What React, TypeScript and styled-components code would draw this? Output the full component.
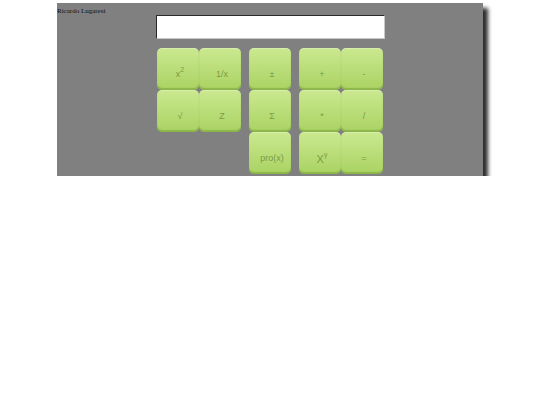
import React from "react"
import styled, { createGlobalStyle } from 'styled-components'

const GlobalStyle = createGlobalStyle`
html, body {
    margin: 0;
    padding: 0;
    background: #FFF;
}
`

const Sup = styled.span`
display: inline-block;
font-size: 7px;
transform: translateY(-4px);
`

type Key = { label: React.ReactNode; big?: boolean } | null

const groups: Key[][] = [
    [
        { label: <>x<Sup>2</Sup></> }, { label: '1/x' },
        { label: '√' }, { label: 'Z' },
        null, null,
    ],
    [
        { label: '±' },
        { label: 'Σ' },
        { label: 'pro(x)' },
    ],
    [
        { label: '+' }, { label: '-' },
        { label: '*' }, { label: '/' },
        { label: <>X<Sup>y</Sup></>, big: true }, { label: '=' },
    ],
]

const App: React.FC = () => (
    <>
        <GlobalStyle />
        <Panel>
            <Title>Ricardo Lugaresi</Title>
            <Display type="text" />
            <Keypad>
                {groups.map((keys, g) => (
                    <Group key={g} cols={keys.length === 3 ? 1 : 2}>
                        {keys.map((k, i) =>
                            k ? <Btn key={i} big={k.big}>{k.label}</Btn> : <Blank key={i} />
                        )}
                    </Group>
                ))}
            </Keypad>
        </Panel>
    </>
)

const Panel = styled.div`
width: 426px;
height: 173px;
box-sizing: border-box;
margin: 3px auto 0;
padding-top: 4px;
background: #808080;
box-shadow: 5px 5px 4px #2e2e2e;
display: flex;
flex-direction: column;
align-items: center;
`

const Title = styled.div`
align-self: flex-start;
font-family: "Liberation Serif", serif;
font-size: 7px;
line-height: 8px;
height: 8px;
color: #111;
`

const Display = styled.input`
width: 229px;
height: 24px;
box-sizing: border-box;
margin: 0;
padding: 0 4px;
background: #FFF;
border: 1px solid;
border-color: #2a2a2a #c8c8c8 #c8c8c8 #2a2a2a;
outline: none;
`

const Keypad = styled.div`
display: flex;
gap: 8px;
margin-top: 9px;
`

const Group = styled.div<{ cols: number }>`
display: grid;
grid-template-columns: repeat(${p => p.cols}, 42px);
grid-auto-rows: 42px;
`

const Btn = styled.div<{ big?: boolean }>`
display: flex;
align-items: center;
justify-content: center;
box-sizing: border-box;
padding: ${p => p.big ? '11px' : '9px'} 0 0 4px;
border-radius: 5px;
background: linear-gradient(#cbe990, #a9d262);
box-shadow: inset 0 -2px 1px rgba(90, 130, 30, 0.35), inset 0 1px 0 rgba(255, 255, 255, 0.25);
font-family: "Liberation Sans", Arial, sans-serif;
font-size: ${p => p.big ? '11px' : '9px'};
color: #7b9b43;
`

const Blank = styled.div``

export default App
